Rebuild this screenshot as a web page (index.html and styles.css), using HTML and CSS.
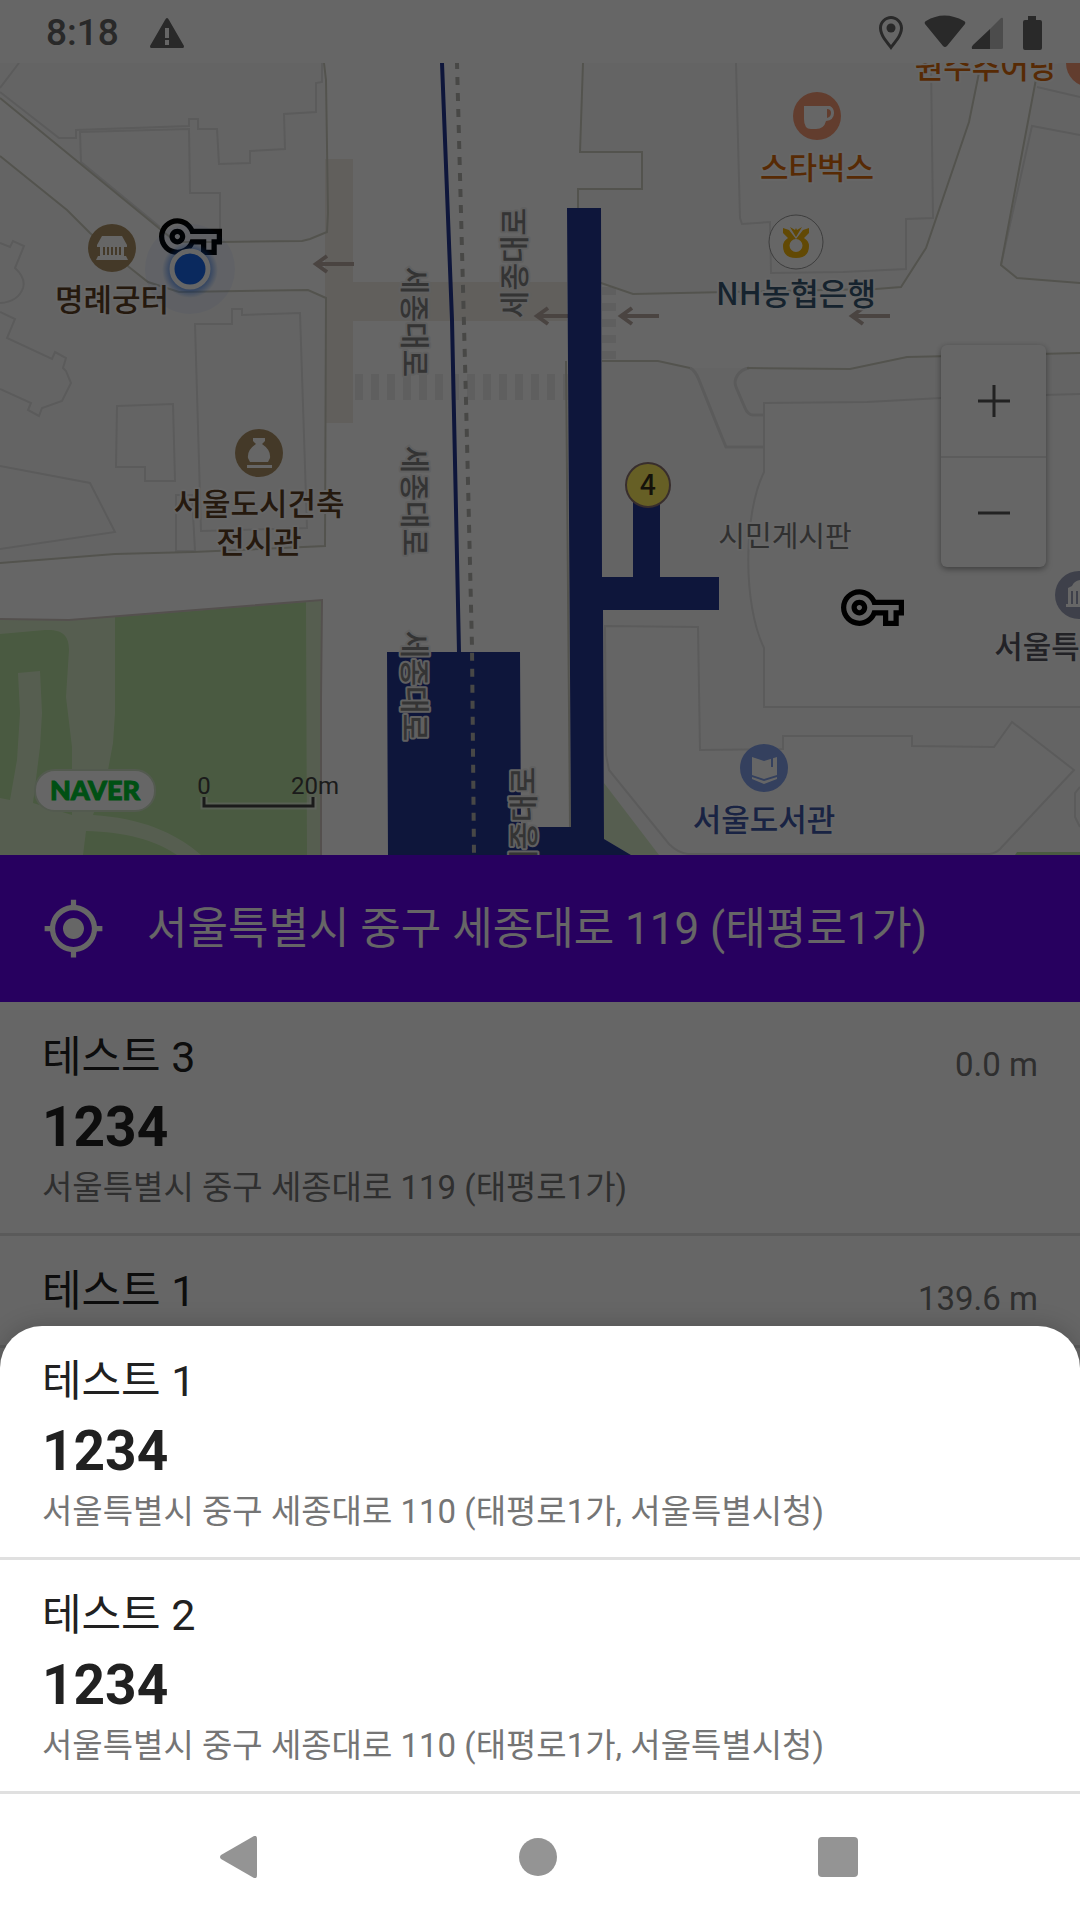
FILE: index.html
```html
<!DOCTYPE html>
<html lang="ko">
<head>
<meta charset="utf-8">
<meta name="viewport" content="width=device-width, initial-scale=1">
<title>서울특별시 중구 세종대로 119</title>
<link rel="stylesheet" href="styles.css">
</head>
<body>
<div class="app">
  <header class="status">
    <span class="status-time">8:18</span>
    <svg class="status-warning" viewBox="0 0 34 30" aria-hidden="true"><path fill-rule="evenodd" d="M17 0Q18 0 19 2L34 28Q34 30 33 30H1Q0 30 0 28L15 2Q16 0 17 0ZM15 10V20H19V10ZM15 22V27H19V22Z"/></svg>
    <svg class="status-icons" viewBox="0 0 164 36" aria-hidden="true">
      <path fill-rule="evenodd" d="M12 1C18 1 24 6 24 13C24 21 17 28 12 35C7 28 0 21 0 13C0 6 6 1 12 1ZM12 4C7 4 3 8 3 13C3 19 8 25 12 30C16 25 21 19 21 13C21 8 17 4 12 4Z"/>
      <circle cx="12" cy="13" r="4.500"/>
      <path d="M46 9Q45 7 47 6Q65-5 85 6Q87 7 86 9L68 31Q66 33 64 31Z"/>
      <path d="M93 34Q92 32 94 30L111 14V34Z"/>
      <path class="signal-off" d="M111 14L122 3Q124 2 124 4V33Q124 34 122 34H111Z"/>
      <path d="M149 1H157V5H161Q163 5 163 7V33Q163 35 161 35H146Q144 35 144 33V7Q144 5 146 5H149Z"/>
    </svg>
  </header>

  <section class="map-area" aria-label="지도">
    <svg class="map" viewBox="0 63 1080 792" role="img" aria-label="세종대로 주변 지도">
      <defs>
        <path id="key" d="M22 19h-6v-4h-2.680c-1.140 2.420-3.600 4-6.320 4-3.860 0-7-3.140-7-7s3.140-7 7-7c2.720 0 5.170 1.580 6.320 4H24v6h-2v4zm-4-2h2v-4h2v-2H11.940l-.230-.670C11.010 8.340 9.110 7 7 7c-2.760 0-5 2.240-5 5s2.240 5 5 5c2.110 0 4.010-1.340 4.710-3.330l.230-.670H18v4zM7 15c-1.650 0-3-1.350-3-3s1.350-3 3-3 3 1.350 3 3-1.350 3-3 3zm0-4c-.550 0-1 .450-1 1s.450 1 1 1 1-.450 1-1-.450-1-1-1z"/>
        <path id="arrow" d="M40 0H2M13-8L2 0L13 8"/>
        <radialGradient id="glow">
          <stop offset="0.600" stop-color="#1a68eb" stop-opacity="0.700"/>
          <stop offset="1" stop-color="#1a68eb" stop-opacity="0"/>
        </radialGradient>
      </defs>

      <rect class="road" x="0" y="63" width="1080" height="792"/>

      <g class="land">
        <path d="M0 63H324L326 80L328 213L327 232L310 239L302 241L220 242H176L160 229L0 98Z"/>
        <path d="M0 156L67 210L90 233L129 267L148 282L179 292L308 290L326 298L325 546L193 552L115 554L0 563Z"/>
        <path d="M583 63L580 152H642V189H578V275L601 283L633 294L876 289L901 287L926 248L969 122L981 63Z"/>
        <path d="M1039 63L1001 265L1017 278L1080 283V63Z"/>
        <path d="M568 361H658L690 368H747L850 369L907 357L1080 353V855H571Z"/>
      </g>

      <g class="paving">
        <rect x="325" y="159" width="28" height="264"/>
        <rect x="353" y="282" width="214" height="39"/>
      </g>
      <path class="crosswalk" stroke-width="26" stroke-dasharray="8 8" d="M355 387H568"/>
      <path class="crosswalk" stroke-width="14" stroke-dasharray="8 8" d="M609 287V360"/>

      <g class="park">
        <path class="park-light" d="M0 619L69 620L322 600L321 855H0Z"/>
        <path d="M115 617L306 602L307 855H201C175 832 140 818 93 815L108 770L113 743L115 713Z"/>
        <path d="M0 634L45 630C62 629 69 635 69 650L66 697L72 747V815L33 803L40 747L42 713L40 671L18 673L20 713L17 760L10 800L0 798Z"/>
        <path d="M86 831C125 832 155 840 177 855H83Z"/>
        <path class="park-light" d="M604 783L659 855H631L604 839Z"/>
        <path d="M1015 855L1017 852H1080V855Z"/>
        <path class="park-edge" d="M0 619L69 620L322 600L321 700V855"/>
      </g>

      <g class="building">
        <path d="M19 63L0 88M0 92L59 138H76V130L189 126V119H198V129H217L219 164L250 163V151L285 149L284 114L316 112V83L322 82V63"/>
        <path d="M160 227L81 162L80 132L189 129L190 193H220V240"/>
        <path d="M0 243L10 247L13 241L24 246L15 268Q26 278 23 288Q18 302 0 303"/>
        <path d="M0 312L15 319L7 338L52 359L55 352L66 358L63 368L66 371L71 383L62 401L42 408L39 416L28 410L31 403L0 389"/>
        <path d="M117 406L173 404L175 481H145V467H116Z"/>
        <path d="M195 324H232V309H242V315L300 313L307 528L201 531Z"/>
        <path d="M176 495V551H195L192 495Z"/>
        <path d="M0 466L90 483L115 532L0 549"/>
        <path d="M736 63L740 218L742 224L770 222L771 273L843 272L906 269V219L933 218L931 63"/>
        <path d="M1037 87L1080 97M1001 265L1032 126L1080 135"/>
        <path class="lane" d="M690 368Q695 370 699 380L719 430L726 447H764M749 368C738 370 733 380 736 387L745 408Q748 415 753 415H764"/>
        <path class="site" d="M1080 394L941 398L867 402L764 403V472C743 515 743 605 764 648V707H1080"/>
        <path class="site" d="M605 626L698 627L700 750L783 749V736H912V746L994 747L1012 722L1074 770L1000 849Q996 853 990 854H688Q678 853 669 844L609 770L606 755Z"/>
        <path d="M1080 787L1075 793V817L1080 827"/>
      </g>

      <g class="kerb">
        <path d="M0 98L160 229L176 242H220L302 241L310 239L327 232L328 213L326 80L324 63"/>
        <path d="M0 156L67 210L90 233L129 267L148 282L179 292L308 290L326 298L325 546L193 552L115 554L0 563"/>
        <path d="M583 63L580 152H642V189H578V275L601 283L633 294L876 289L901 287L926 248L969 122L981 63"/>
        <path d="M602 361H658L690 368M747 368L850 369L907 357L1080 353"/>
        <path d="M1039 63L1001 265L1017 278L1080 283M566 361L570 827"/>
      </g>

      <g class="arrows">
        <use href="#arrow" x="314" y="264"/>
        <use href="#arrow" x="535" y="316"/>
        <use href="#arrow" x="619" y="316"/>
        <use href="#arrow" x="850" y="316"/>
      </g>

      <g class="subway">
        <path class="subway-line" d="M442 63L452 320L459 652"/>
        <path d="M387 652H520L521 827H571L567 208H601L602 577H633V500H660V577H719V610H603L604 839L631 855H388Z"/>
      </g>
      <path class="rail" d="M457 63L466 400L472 647L474 855"/>

      <g class="label street">
        <text transform="translate(414 322) rotate(90)" y="10">세종대로</text>
        <text transform="translate(414 501) rotate(90)" y="10">세종대로</text>
        <text transform="translate(414 686) rotate(90)" y="10">세종대로</text>
        <text transform="translate(515 263) rotate(-90)" y="10">세종대로</text>
        <text transform="translate(524 822) rotate(-90)" y="10">세종대로</text>
      </g>

      <g class="exit">
        <circle cx="648" cy="485" r="22"/>
        <text x="648" y="495">4</text>
      </g>

      <g class="poi-heritage">
        <circle cx="112" cy="248" r="24"/>
        <path class="glyph" d="M102 236H122L127 245V247H124V256H126L128 260H96L98 256H100V247H97V245Z"/>
        <path class="bars" d="M104 247V255M108 247V255M112 247V255M116 247V255M120 247V255"/>
        <circle cx="259" cy="453" r="24"/>
        <path class="glyph" d="M253 438H265V441L262 444Q271 450 270 458L268 462H250L248 458Q247 450 256 444L253 441ZM247 465H272V468H247Z"/>
      </g>
      <g class="poi-cafe">
        <circle cx="817" cy="116" r="24"/>
        <path class="glyph" fill-rule="evenodd" d="M804 106H830Q834 108 834 113Q834 120 826 121Q824 129 816 129H811Q804 129 804 119ZM827 109V118Q831 117 831 113Q831 109 827 109Z"/>
        <circle cx="1090" cy="63" r="24"/>
      </g>
      <g class="poi-bank">
        <circle cx="796" cy="242" r="27"/>
        <path fill-rule="evenodd" d="M783 228L789 230L796 239L803 230L809 228V233L804 238Q809 241 809 246Q809 258 796 258Q783 258 783 246Q783 241 788 238L783 233ZM796 239A6 6 0 1 0 796 252A6 6 0 1 0 796 239ZM790 227L795 230L796 228L797 230L802 227L796 237Z"/>
      </g>
      <g class="poi-library">
        <circle cx="764" cy="768" r="24"/>
        <path class="glyph" d="M752 757L764 761L777 757V775L764 779L752 775ZM752 777L764 781L777 777V779L764 784L752 779Z"/>
        <path class="mark" d="M772 756V767"/>
      </g>
      <g class="poi-hall">
        <circle cx="1079" cy="595" r="24"/>
        <path class="glyph" d="M1066 607V604H1068V588L1072 586Q1074 581 1080 580V607Z"/>
        <path class="mark" d="M1072 591V604M1077 591V604"/>
      </g>

      <g class="label place">
        <text class="heritage" x="112" y="311">명례궁터</text>
        <text class="heritage" x="259" y="515">서울도시건축</text>
        <text class="heritage" x="259" y="553">전시관</text>
        <text class="cafe" x="817" y="179">스타벅스</text>
        <text class="cafe" x="986" y="78">원주추어탕</text>
        <text class="bank" x="796" y="305">NH농협은행</text>
        <text class="library" x="764" y="831">서울도서관</text>
        <text class="hall" x="1037" y="658">서울특</text>
        <text class="board" x="785" y="547">시민게시판</text>
      </g>

      <use href="#key" transform="translate(159 205) scale(2.625)"/>
      <use href="#key" transform="translate(841 576) scale(2.625)"/>
      <circle class="accuracy" cx="190" cy="269" r="45"/>
      <circle cx="190" cy="270" r="28" fill="url(#glow)"/>
      <circle class="me" cx="190" cy="269" r="18"/>

      <rect class="logo" x="35" y="770" width="120" height="41" rx="20"/>
      <text class="logo-text" x="95" y="800">NAVER</text>
      <path class="scale-halo" d="M204 797V806H313V797"/>
      <path class="scale-bar" d="M204 797V806H313V797"/>
      <g class="scale-text"><text x="204" y="794">0</text><text x="315" y="794">20m</text></g>
    </svg>

    <div class="zoom">
      <button class="zoom-button" type="button" aria-label="확대"><svg viewBox="0 0 32 32" aria-hidden="true"><path d="M16 0V32M0 16H32"/></svg></button>
      <button class="zoom-button" type="button" aria-label="축소"><svg viewBox="0 0 32 32" aria-hidden="true"><path d="M0 16H32"/></svg></button>
    </div>
  </section>

  <div class="address-bar">
    <button class="locate" type="button" aria-label="현재 위치">
      <svg viewBox="0 0 24 24" aria-hidden="true"><path d="M12 8c-2.210 0-4 1.790-4 4s1.790 4 4 4 4-1.790 4-4-1.790-4-4-4zm8.940 3A8.994 8.994 0 0 0 13 3.060V1h-2v2.060A8.994 8.994 0 0 0 3.060 11H1v2h2.060A8.994 8.994 0 0 0 11 20.940V23h2v-2.060A8.994 8.994 0 0 0 20.940 13H23v-2h-2.060zM12 19c-3.870 0-7-3.130-7-7s3.130-7 7-7 7 3.130 7 7-3.130 7-7 7z"/></svg>
    </button>
    <span>서울특별시 중구 세종대로 119 (태평로1가)</span>
  </div>

  <ul class="list">
    <li class="item">
      <span class="item-title">테스트 3</span>
      <span class="item-distance">0.0 m</span>
      <strong class="item-code">1234</strong>
      <span class="item-address">서울특별시 중구 세종대로 119 (태평로1가)</span>
    </li>
    <li class="item">
      <span class="item-title">테스트 1</span>
      <span class="item-distance">139.6 m</span>
    </li>
  </ul>

  <div class="scrim"></div>

  <section class="sheet" role="dialog" aria-label="선택한 위치">
    <ul class="list">
      <li class="item">
        <span class="item-title">테스트 1</span>
        <strong class="item-code">1234</strong>
        <span class="item-address">서울특별시 중구 세종대로 110 (태평로1가, 서울특별시청)</span>
      </li>
      <li class="item">
        <span class="item-title">테스트 2</span>
        <strong class="item-code">1234</strong>
        <span class="item-address">서울특별시 중구 세종대로 110 (태평로1가, 서울특별시청)</span>
      </li>
    </ul>
  </section>
</div>

<nav class="system-nav" aria-label="시스템">
  <button type="button" aria-label="뒤로"><svg viewBox="0 0 42 42" aria-hidden="true"><path d="M37 0Q40-1 40 3V39Q40 43 37 42L4 23Q2 21 4 19Z"/></svg></button>
  <button type="button" aria-label="홈"><svg viewBox="0 0 42 42" aria-hidden="true"><circle cx="21" cy="21" r="19"/></svg></button>
  <button type="button" aria-label="최근 앱"><svg viewBox="0 0 42 42" aria-hidden="true"><rect x="1" y="1" width="40" height="40" rx="4"/></svg></button>
</nav>
</body>
</html>
```
FILE: styles.css
```css
* {
  box-sizing: border-box;
}

body {
  margin: 0;
  min-height: 100vh;
  display: flex;
  flex-direction: column;
  background: #fff;
  color: #212121;
  font-family: Roboto, "Noto Sans CJK KR", sans-serif;
}

button {
  display: flex;
  align-items: center;
  justify-content: center;
  margin: 0;
  padding: 0;
  border: 0;
  background: none;
}

.app {
  position: relative;
  flex: 1;
  overflow: hidden;
}

/* Status bar */
.status {
  display: flex;
  align-items: center;
  height: 63px;
  padding: 2px 37px 0 46px;
  color: #666;
  fill: #666;
}

.status-time {
  font-size: 37px;
  font-weight: 500;
  line-height: 60px;
}

.status-warning {
  width: 34px;
  height: 30px;
  margin-left: 31px;
}

.status-icons {
  width: 164px;
  height: 36px;
  margin-left: auto;
}

.signal-off {
  fill: #bebebe;
}

/* Map */
.map-area {
  position: relative;
}

.map {
  display: block;
  width: 100%;
  height: auto;
}

.road { fill: #fff; }
.land { fill: #fafafa; }
.paving { fill: #f2ede7; }
.crosswalk { fill: none; stroke: #ededed; }
.park { fill: #b9e1a2; }
.park-light { fill: #d7ecc8; }
.park-edge { fill: none; stroke: #d2c8c3; stroke-width: 2; }
.building { fill: none; stroke: #e3e3e3; stroke-width: 2; }
.building .lane { stroke-width: 3; }
.building .site { fill: #fcfcfc; }
.kerb { fill: none; stroke: #d0d0c2; stroke-width: 2; }
.arrows { fill: none; stroke: #b9aaa4; stroke-width: 4; }
.subway { fill: #253794; }
.subway-line { fill: none; stroke: #253794; stroke-width: 4; }
.rail { fill: none; stroke: #b4b4b0; stroke-width: 4; stroke-dasharray: 8 8; stroke-dashoffset: 2; }

.label {
  paint-order: stroke;
  stroke: #fff;
  stroke-width: 4;
  stroke-linejoin: round;
  text-anchor: middle;
  font-family: "Noto Sans CJK KR", sans-serif;
}

.street { fill: #828282; font-size: 30px; font-weight: 500; stroke: #f0f0f0; }
.place { font-size: 31px; font-weight: 500; }
.heritage { fill: #5c4023; }
.cafe { fill: #d96a0c; }
.bank { fill: #375873; }
.library { fill: #3f59a8; }
.hall { fill: #555560; }
.board { fill: #787878; font-size: 29px; font-weight: 400; }

.exit circle { fill: #ffed5c; stroke: #8c7370; stroke-width: 2; }
.exit text { fill: #322d19; text-anchor: middle; font-size: 28px; font-weight: 500; font-family: "Noto Sans CJK KR", sans-serif; }

.glyph { fill: #fff; }
.poi-heritage circle { fill: #ab9065; }
.poi-heritage .bars { fill: none; stroke: #ab9065; stroke-width: 2; }
.poi-cafe circle { fill: #f59873; }
.poi-bank { fill: #f5b60a; }
.poi-bank circle { fill: #fff; stroke: #999; stroke-width: 1; }
.poi-library circle { fill: #82a0eb; }
.poi-library .mark { fill: none; stroke: #82a0eb; stroke-width: 2; }
.poi-hall circle { fill: #9ba0b9; }
.poi-hall .mark { fill: none; stroke: #9ba0b9; stroke-width: 2; }

.accuracy { fill: #1a68eb; fill-opacity: 0.06; }
.me { fill: #1a68eb; stroke: #fff; stroke-width: 5; }

.logo { fill: #fff; stroke: #cfe0c6; stroke-width: 2; }
.logo-text { fill: #00c832; stroke: #00c832; stroke-width: 1; text-anchor: middle; font: 900 27px Lato, sans-serif; }
.scale-halo { fill: none; stroke: #fff; stroke-opacity: 0.5; stroke-width: 7; }
.scale-bar { fill: none; stroke: #444; stroke-width: 3; }
.scale-text { fill: #444; text-anchor: middle; font-size: 24px; }

.zoom {
  position: absolute;
  top: 282px;
  right: 34px;
  width: 105px;
  border-radius: 6px;
  background: #fff;
  box-shadow: 0 2px 6px rgba(0, 0, 0, 0.4);
}

.zoom-button {
  width: 100%;
  height: 111px;
}

.zoom-button + .zoom-button {
  border-top: 2px solid #e6e6e6;
}

.zoom-button svg {
  width: 32px;
  height: 32px;
  fill: none;
  stroke: #555;
  stroke-width: 3;
}

/* Current address */
.address-bar {
  display: flex;
  align-items: center;
  gap: 42px;
  min-height: 147px;
  padding: 0 42px;
  background: #6200ee;
  color: #fff;
  font-size: 44px;
  line-height: 60px;
}

.locate {
  flex: none;
  fill: #fff;
}

.locate svg {
  width: 63px;
  height: 63px;
}

/* Lists */
.list {
  margin: 0;
  padding: 0;
  list-style: none;
}

.item {
  display: grid;
  grid-template-columns: 1fr auto;
  padding: 25px 42px 24px;
  border-bottom: 3px solid #e0e0e0;
}

.item-title {
  font-size: 43px;
  line-height: 60px;
}

.item-distance {
  align-self: end;
  color: #757575;
  font-size: 33px;
  line-height: 45px;
}

.item-code {
  grid-column: 1 / -1;
  font-size: 55px;
  font-weight: 700;
  line-height: 80px;
}

.item-address {
  grid-column: 1 / -1;
  color: #757575;
  font-size: 33px;
  line-height: 42px;
}

/* Bottom sheet */
.scrim {
  position: absolute;
  inset: 0;
  background: rgba(0, 0, 0, 0.6);
}

.sheet {
  position: absolute;
  right: 0;
  bottom: 0;
  left: 0;
  border-radius: 42px 42px 0 0;
  background: #fff;
  box-shadow: 0 0 24px rgba(0, 0, 0, 0.2);
}

/* System navigation */
.system-nav {
  display: grid;
  grid-template-columns: repeat(3, 1fr);
  height: 126px;
  padding: 0 92px 0 88px;
  background: #fff;
  fill: #949494;
}

.system-nav svg {
  width: 42px;
  height: 42px;
}
```
